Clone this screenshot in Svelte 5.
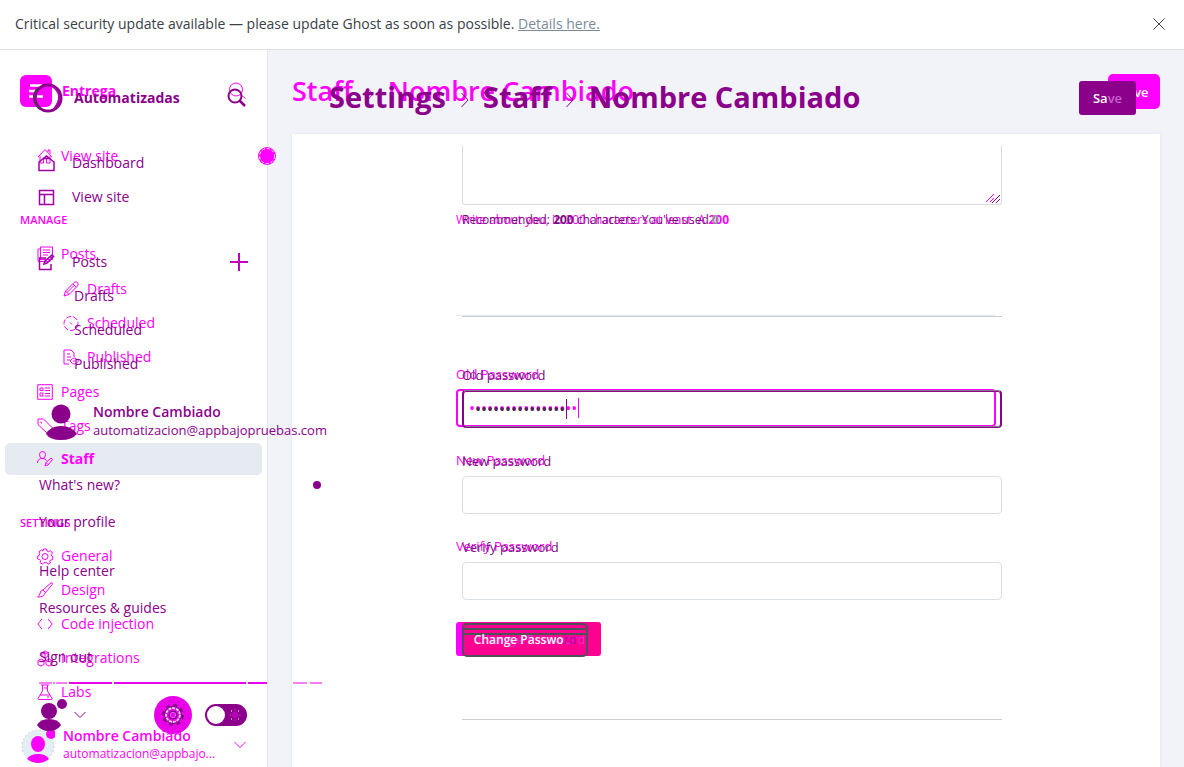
<script>
  const icons = {
    home: 'M1 9 8 1.500 15 9M3 7.500V15h3.500v-5h3v5H13V7.500M11 4V2h2v4',
    house: 'M1 7V15.500h15V7L8.500 1zM6 3.500h5',
    layout: 'M1.500 1.500h14v14H1.500zM1.500 5.500h14M6.500 5.500V15',
    posts: 'M3.500 1h12v12.500h-12zM3.500 3H1v12.500h12v-2M6 4h7M6 6.500h7M6 9h5',
    edit: 'M8 4H1.500v11.500h11.500V10M6 10l1-3 7-6 1.500 1.500L9 9zM12.500 2.500l1.500 2',
    pencil: 'M1 15l1.500-5L11 1.500Q13 0 14.500 1.500T14.500 5L6 13.500zM2.500 10 6 13.500M10 3l3 3M4 11.500l7.500-7.500',
    published: 'M6 15H1V1h7l3 3v4M4 5h3M4 8h4M4 11h3M7 12q4.500-6 8.500 0-4 6-8.500 0M11 11v2',
    pages: 'M.700.700h14.600v14.600H.700zM3 4h3v2.500H3zM3 9h3v3H3zM8 4h5M8 6.500h5M8 9.500h5M8 12h5',
    tag: 'M1 1h5.500L16 10.500 11 16 1 6.500zM4 3.500v1.500h1',
    staff: 'M2.500 3.500q0-3 3-3t3 3q0 4-3 4t-3-4M.500 12q0-4.500 5-4.500 2.500 0 4 2M8 15l1-3.500 5-4.500 1.500 1.500L11 14zM9 11.500l2 2',
    gear: 'M6.500 1h3l.500 2 1.500.700 2-1 2 2.300-1.300 1.600.500 1.400 1.300.700-.500 3-2 .300-.800 1.200.800 1.800-2.300 1-1.400-1.300H7L5.500 16 3 14.700l.500-2-.800-1.200-2-.500V8l1.600-.700.500-1.600-.800-2L4.500 2l1.500 1zM8 5.500a3 3 0 1 1 0 6 3 3 0 0 1 0-6',
    brush: 'M6 8 14 .800q2 0 1.300 1.600L8.500 10.500zM6 8l2.500 2.500M6 8q-3 .500-3 3.500-.500 2-2.500 3.500 6 .500 8-4.500',
    code: 'M5 3 .800 8 5 13M11 3l4.200 5L11 13',
    integrations: 'M5 2.500 8 1l3 1.500v4L8 8 5 6.500zM1 10.500 4 9l3 1.500v4L4 16l-3-1.500zM9 10.500 12 9l3 1.500v4L12 16l-3-1.500zM5 2.500 8 4l3-1.500M8 4v4M1 10.500 4 12l3-1.500M9 10.500l3 1.500 3-1.500',
    labs: 'M4 1h8M5.500 1v6L1 14.500q0 1 1 1h12q1 0 1-1L10.500 7V1M3 11h10M7 4h3M11 12v2'
  };
  const manage = [['pages', 'Pages'], ['tag', 'Tags'], ['staff', 'Staff']];
  const settings = [['gear', 'General'], ['brush', 'Design'], ['code', 'Code injection'], ['integrations', 'Integrations'], ['labs', 'Labs']];
  const groups = [["What's new?", 'Your profile'], ['Help center', 'Resources & guides'], ['Sign out']];
  const dotsA = '•'.repeat(18);
  const dotsB = '•'.repeat(15);
</script>

{#snippet icon(name, heavy)}
  <svg class="icon" class:heavy viewBox="0 0 17 17" aria-hidden="true"><path d={icons[name]} /></svg>
{/snippet}

<div class="app">
  <header class="banner">
    <p>Critical security update available — please update Ghost as soon as possible. <a href="#details">Details here.</a></p>
    <button class="plain" aria-label="Close"><svg width="12" height="12" viewBox="0 0 12 12"><path d="M.5.5l11 11M11.500.5l-11 11" stroke="#394047" fill="none" /></svg></button>
  </header>

  <div class="body">
    <aside class="sidebar">
      <div class="layer first">
        <div class="brand">
          <svg width="32" height="32" viewBox="0 0 32 32"><rect width="32" height="32" rx="6" fill="#f0f" stroke="none" /><path d="M10 10.500h12M9 16h9M9 21.500h4M17 21.500h6" stroke="#fff" stroke-width="2.500" /></svg>
          <strong>Entrega</strong>
          <button class="plain" aria-label="Search"><svg width="18" height="18" viewBox="0 0 18 18"><circle cx="8" cy="7.500" r="6.500" /><path d="M12.500 12.500l5 4" /></svg></button>
        </div>
        <nav>
          <a class="row solo" href="#site">{@render icon('home')}View site</a>
          <h2>MANAGE</h2>
          <a class="row" href="#posts">{@render icon('posts')}Posts</a>
          <div class="sub">
            <a class="row" href="#drafts">{@render icon('pencil')}Drafts</a>
            <a class="row" href="#scheduled"><svg class="icon" viewBox="0 0 17 17"><circle cx="8" cy="8.500" r="7" stroke-dasharray="5 2" /><path d="M7 7.500l2 2" /></svg>Scheduled</a>
            <a class="row" href="#published">{@render icon('published')}Published</a>
          </div>
          {#each manage as [name, text]}
            <a class="row" class:active={text === 'Staff'} href="#{name}">{@render icon(name)}{text}</a>
          {/each}
          <h2 class="lower">SETTINGS</h2>
          {#each settings as [name, text]}
            <a class="row" href="#{name}">{@render icon(name)}{text}</a>
          {/each}
        </nav>
        <div class="account">
          <svg width="34" height="36" viewBox="0 0 34 36"><circle cx="17" cy="19" r="16" fill="#e5edf4" stroke="#ccd8e0" stroke-dasharray="2 2" /><ellipse cx="17" cy="17" rx="7" ry="8" fill="#f0f" /><path d="M6 32q3-5 11-5t11 5q-5 4-11 4t-11-4" fill="#f0f" /><circle cx="30" cy="7" r="5" fill="#f0f" /></svg>
          <div><strong>Nombre Cambiado</strong><span>automatizacion@appbajo...</span></div>
          <svg class="chev" width="12" height="8" viewBox="0 0 12 8"><path d="M.5 1 6 6.500 11.500 1" /></svg>
        </div>
      </div>

      <div class="layer second">
        <div class="brand">
          <svg width="30" height="30" viewBox="0 0 30 30"><circle cx="15" cy="15" r="13" fill="none" stroke="#8b008b" stroke-width="3" /><path d="M7 26A14 14 0 0 1 5 5" stroke="#553559" stroke-width="2" fill="none" /><path d="M19 3q13 9 2 23" stroke="#b000b0" stroke-width="2" fill="none" /></svg>
          <strong>Automatizadas</strong>
          <button class="plain" aria-label="Find"><svg width="19" height="20" viewBox="0 0 19 20"><circle cx="8" cy="8" r="6.500" /><path d="M12.500 12.500l5.500 5.500" stroke-width="2.500" /></svg></button>
        </div>
        <nav>
          <a class="row" href="#dashboard">{@render icon('house', true)}Dashboard</a>
          <a class="row" href="#view">{@render icon('layout', true)}View site</a>
          <a class="row posts" href="#all">{@render icon('edit', true)}Posts<svg class="plus" width="18" height="18" viewBox="0 0 18 18"><path d="M9 0v18M0 9h18" /></svg></a>
          <div class="sub">
            <a class="row" href="#d">Drafts</a>
            <a class="row" href="#s">Scheduled</a>
            <a class="row" href="#p">Published</a>
          </div>
        </nav>
        <div class="tools">
          <svg width="32" height="34" viewBox="0 0 32 34"><circle cx="12" cy="13" r="8" /><path d="M0 27q3-6 12-6t12 6q-4 6-12 6T0 27" /><circle cx="25" cy="6" r="5" /></svg>
          <svg class="chev" width="12" height="8" viewBox="0 0 12 8"><path d="M.5 1 6 6.500 11.500 1" /></svg>
          <button class="plain cog" aria-label="Settings"><svg width="38" height="38" viewBox="0 0 38 38"><circle cx="19" cy="19" r="19" fill="#e800e8" /><g fill="none"><circle cx="19" cy="19" r="7" stroke="#ddd" stroke-width="2" stroke-dasharray="3 1" /><circle cx="19" cy="19" r="10" stroke="#8b008b" stroke-width="2" stroke-dasharray="4 3.850" /><circle cx="19" cy="19" r="8.500" stroke="#70107a" /><circle cx="19" cy="19" r="4" stroke="#70107a" /><circle cx="19" cy="19" r="2.500" stroke="#e8b0e8" stroke-dasharray="1 1" /></g></svg></button>
          <button class="plain" aria-label="Dark mode"><svg width="42" height="22" viewBox="0 0 42 22"><rect width="42" height="22" rx="11" fill="#8b008b" /><circle cx="11" cy="11" r="9" fill="#fff" /><g stroke="#c000c0" stroke-width="2" fill="none"><circle cx="30" cy="11" r="2" /><path d="M30 5v2M30 15v2M24 11h2M34 11h2" /></g><path d="M26 7h1M33 7h1M26 15h1M33 15h1" stroke="#fff" /></svg></button>
        </div>
      </div>

      <div class="menu">
        <div class="profile">
          <svg width="32" height="38" viewBox="0 0 32 38"><ellipse cx="15" cy="12" rx="9.500" ry="9.500" /><path d="M0 32q4-8 15-8t16 8q-5 6-16 6T0 32" /></svg>
          <div><strong>Nombre Cambiado</strong><span>automatizacion@appbajopruebas.com</span></div>
        </div>
        {#each groups as group}
          <ul>
            {#each group as text}
              <li><a href="#menu">{text}</a>{#if text === "What's new?"}<i></i>{/if}</li>
            {/each}
          </ul>
        {/each}
        <svg class="rule" height="2" width="283"><path d="M0 1h13M14 1h2M17 1h11M254 1h14M271 1h12" stroke-width="1" /><path d="M30 1h43M75 1h132M209 1h19" stroke-width="2" /></svg>
      </div>
      <svg class="handle" width="18" height="18" viewBox="0 0 18 18"><circle cx="9" cy="9" r="9" fill="#f0f" stroke="none" /><circle cx="9" cy="9" r="7.500" fill="none" stroke="#fff" stroke-dasharray="3 2" /></svg>
    </aside>

    <main>
      <div class="heading">
        <div class="layer top-a">
          <h1>Staff <svg width="7" height="14" viewBox="0 0 7 14"><path d="M.5 1 6 7 .5 13" /></svg> Nombre Cambiado</h1>
          <button class="save">Save</button>
        </div>
        <div class="layer top-b">
          <h1>Settings <svg width="8" height="16" viewBox="0 0 8 16"><path d="M.5 1 7 8 .5 15" /></svg> Staff <svg width="8" height="16" viewBox="0 0 8 16"><path d="M.5 1 7 8 .5 15" /></svg> Nombre Cambiado</h1>
          <button class="save">Sa<span>ve</span></button>
        </div>
      </div>

      <div class="panel">
        <form class="layer form-a">
          <div class="bio"></div>
          <p>Write about you, in 200 characters at least. A <b>200</b></p>
          <hr />
          <label for="a1">Old Password</label>
          <div class="field"><input id="a1" class="focus" type="text" value={dotsA} /><i class="caret"></i></div>
          <label for="a2">New Password</label>
          <div class="field"><input id="a2" type="password" /></div>
          <label for="a3">Verify Password</label>
          <div class="field"><input id="a3" type="password" /></div>
          <button type="button">Change Password</button>
        </form>
        <form class="layer form-b">
          <div class="bio"><textarea aria-label="Bio"></textarea><svg class="grip" width="14" height="9" viewBox="0 0 14 9"><path d="M0 8 8 0M4 8l4-4" stroke="#f0f" /><path d="M6 9l8-8M10 9l4-4" stroke="#8b008b" /></svg></div>
          <p>Recommended: <b>200</b> characters. You've used <b class="zero">0</b></p>
          <hr />
          <label for="b1">Old password</label>
          <div class="field"><input id="b1" class="focus" type="text" value={dotsB} /><i class="caret"></i></div>
          <label for="b2">New password</label>
          <div class="field"><input id="b2" type="password" /></div>
          <label for="b3">Verify password</label>
          <div class="field"><input id="b3" type="password" /></div>
          <button type="button">Change Passwo<span>rd</span></button>
          <hr class="last" />
        </form>
      </div>
    </main>
  </div>
</div>

<style>
  :global(body) { margin: 0; }
  * { box-sizing: border-box; }
  .app { font: 14px/18px "Open Sans", sans-serif; min-height: 100vh; display: flex; flex-direction: column; overflow: hidden; color: #8b008b; }
  a { color: inherit; text-decoration: none; }
  h1, h2, p, ul { margin: 0; padding: 0; }
  button, input, textarea { font: inherit; }
  .plain { border: 0; background: none; padding: 0; display: flex; color: inherit; }
  .banner { height: 50px; border-bottom: 1px solid #dde1e5; display: flex; align-items: center; justify-content: space-between; padding: 0 19px 2px 15px; color: #394047; background: #fff; }
  .banner a { color: #7c8b9a; text-decoration: underline; }
  .body { display: flex; flex: 1; }
  .layer { grid-area: 1 / 1; min-width: 0; }
  .sidebar { position: relative; flex: 0 0 268px; display: grid; grid-template-columns: minmax(0, 1fr); background: #fff; border-right: 1px solid #e4e8ee; }
  .sidebar .layer { display: flex; flex-direction: column; }
  .first { color: #f0f; stroke: #f0f; padding: 25px 5px 4px; }
  .second { color: #8b008b; stroke: #8b008b; padding: 33px 5px 31px; z-index: 1; pointer-events: none; }
  .sidebar svg { flex: none; }
  .brand { display: flex; align-items: center; gap: 10px; padding-left: 15px; height: 32px; }
  .brand button { margin-left: auto; margin-right: 16px; }
  .brand button svg { fill: none; stroke: currentColor; }
  .second .brand { padding-left: 28px; gap: 11px; height: 30px; }
  .second .brand button svg { stroke-width: 2; }
  .icon { width: 17px; height: 17px; fill: none; stroke: currentColor; stroke-width: 1; }
  .icon.heavy { stroke: #a000a8; stroke-width: 1.500; }
  .row { display: flex; align-items: center; gap: 7px; height: 34px; padding-left: 32px; border-radius: 5px; }
  .first .solo { margin-top: 32px; }
  .first h2 { font-size: 11px; line-height: 20px; font-weight: 600; margin: 37px 0 7px 15px; }
  .first .lower { margin: 38px 0 6px 15px; }
  .first .sub { padding: 1px 0 1px 26px; }
  .first .active { background: #e6ebf2; font-weight: 700; height: 32px; }
  .second nav { padding-top: 33px; }
  .second .row { padding-left: 33px; gap: 17px; }
  .second .posts { margin-top: 31px; }
  .second .sub .row { padding-left: 69px; }
  .plus { margin-left: auto; margin-right: 14px; stroke: #c000c0; stroke-width: 2; }
  .account { margin-top: auto; display: flex; align-items: center; padding-left: 16px; gap: 8px; height: 36px; }
  .account svg { stroke: none; }
  .account div, .profile div { display: flex; flex-direction: column; }
  .account div { flex: 1; }
  .account span { font-size: 12px; }
  .profile span { font-size: 13px; }
  strong { font-weight: 700; }
  .account strong, .profile strong { font-weight: 600; }
  .chev { fill: none; }
  .account .chev { stroke: #f0f; margin-right: 16px; }
  .tools { margin-top: auto; display: flex; align-items: center; height: 42px; padding: 0 15px 0 32px; gap: 13px; stroke: none; fill: #8b008b; }
  .tools .chev { stroke: #8b008b; stroke-width: 1; margin-left: -8px; fill: none; }
  .cog { margin-left: auto; }
  .menu { position: absolute; top: 349px; left: 39px; width: 282px; z-index: 2; fill: #8b008b; }
  .profile { display: flex; gap: 15px; padding: 3px 0 26px 7px; line-height: 19px; }
  .menu ul { list-style: none; margin-bottom: 12px; }
  .menu ul:last-of-type { margin-bottom: 7px; }
  .menu li { height: 37px; display: flex; align-items: center; justify-content: space-between; }
  .menu i { width: 8px; height: 8px; border-radius: 50%; background: #8b008b; }
  .rule { display: block; fill: none; stroke: #e800e8; }
  .handle { position: absolute; right: -9px; top: 97px; z-index: 2; }
  main { flex: 1; min-width: 0; background: #f1f3f8; padding: 0 24px; display: flex; flex-direction: column; }
  .heading { height: 84px; display: grid; grid-template-columns: minmax(0, 1fr); }
  .heading .layer { display: flex; justify-content: space-between; align-items: flex-start; }
  .heading svg { fill: none; stroke: currentColor; margin: 0 7px; }
  .top-a { color: #f0f; padding-top: 24px; }
  .top-a h1 { font-size: 27px; line-height: 34px; font-weight: 600; white-space: nowrap; }
  .top-b { z-index: 1; padding: 31px 24px 0 37px; }
  .top-b h1 { font-size: 29px; line-height: 32px; font-weight: 700; white-space: nowrap; }
  .save { color: #fff; border: 0; padding: 0; font-size: 13px; font-weight: 600; }
  .top-a .save { width: 52px; height: 35px; background: #f0f; border-radius: 5px; }
  .top-b .save { width: 57px; height: 34px; background: #8b008b; border-radius: 3px; }
  .top-b .save span { color: #c860d0; }
  .panel { flex: 1; background: #fff; box-shadow: 0 0 3px #dfe3e9; padding: 12px 158px 0 164px; display: grid; grid-template-columns: minmax(0, 1fr); }
  form { display: flex; flex-direction: column; font-size: 13px; }
  .form-a { color: #f0f; margin-right: 6px; }
  .form-b { color: #76107c; margin-left: 6px; z-index: 1; }
  .bio { height: 59px; position: relative; }
  textarea { width: 100%; height: 59px; display: block; border: 1px solid #dadde0; border-top: 0; border-radius: 0 0 3px 3px; background: none; resize: none; }
  .grip { position: absolute; right: 2px; bottom: 2px; fill: none; }
  p { white-space: nowrap; }
  form p { font-size: 12px; line-height: 18px; margin-top: 6px; }
  b { font-weight: 700; }
  .zero { color: #899; }
  hr { width: 100%; border: 0; border-top: 1px solid #ccd0d2; margin: 87px 0 49px; }
  .form-a hr { border-color: #e5eaf0; margin-top: 86px; }
  label { line-height: 18px; font-weight: 500; margin-bottom: 6px; }
  .field { position: relative; height: 38px; margin-bottom: 24px; }
  input { width: 100%; height: 38px; border: 1px solid #dadfe3; border-radius: 4px; background: none; padding: 0 11px; display: block; outline: 0; }
  .form-a input { border-color: transparent; }
  .focus { font-size: 16px; border-width: 2px; }
  .form-a .focus { border-color: #f0f; color: #f0f; }
  .form-b .focus { border: 2px solid #8b008b; border-top: 1px solid #808080; border-bottom: 1px solid #8b008b; box-shadow: inset 0 1px #8b008b, inset 0 -1px #808080; color: #4a2850; }
  .caret { position: absolute; left: 104px; top: 9px; height: 20px; border-left: 1px solid #8b008b; }
  .form-a .caret { left: 122px; border-color: #f0f; }
  form button { width: 145px; height: 34px; flex: none; border: 0; border-left: 6px solid #f0f; border-radius: 3px; background: #ff0090; color: #e030d0; padding: 0; margin-top: -1px; }
  .form-b button { width: 126px; font-size: 12px; font-weight: 600; border: 2px solid #505058; border-radius: 5px; color: #fff; background: linear-gradient(transparent 3px, #505058 3px, #505058 5px, transparent 5px, transparent 8px, #505058 8px, #505058 10px, transparent 10px); white-space: nowrap; }
  form button span { color: #c000a8; }
  .form-b .last { margin: 62px 0 0; }
</style>
